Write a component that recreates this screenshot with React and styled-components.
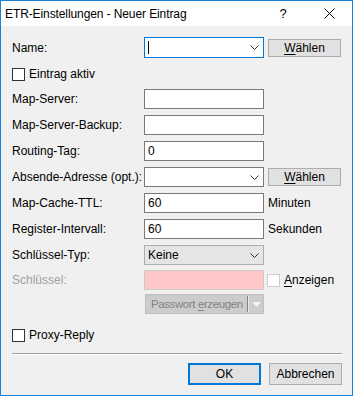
import React from "react";
import styled, { createGlobalStyle } from "styled-components";

const Global = createGlobalStyle`
  html, body { margin: 0; padding: 0; background: #ffffff; }
  body { font-family: "Liberation Sans", Arial, sans-serif; font-size: 12px; color: #000; }
`;

const Window = styled.div`
  box-sizing: border-box;
  width: 353px;
  height: 396px;
  border: 1px solid #1883d7;
  background: #f0f0f0;
  display: flex;
  flex-direction: column;
`;

const TitleBar = styled.div`
  height: 25px;
  background: #ffffff;
  display: flex;
  align-items: center;
  padding-left: 4px;
`;

const Title = styled.div`
  flex: 1;
  font-size: 12px;
  color: #000;
  padding-top: 1px;
  letter-spacing: -0.1px;
`;

const TitleButton = styled.div`
  width: ${(p) => p.$w}px;
  height: 25px;
  display: flex;
  align-items: center;
  justify-content: center;
  font-size: 13px;
  color: #000;
`;

const Body = styled.div`
  flex: 1;
  padding: 11px 11px 0 11px;
  display: flex;
  flex-direction: column;
`;

const Row = styled.div`
  display: grid;
  grid-template-columns: 128px 120px auto;
  column-gap: 4px;
  align-items: center;
  height: ${(p) => p.$h || 20}px;
  margin-top: ${(p) => p.$mt || 0}px;
`;

const Label = styled.div`
  color: ${(p) => (p.$disabled ? "#a0a0a0" : "#000")};
  white-space: nowrap;
`;

const Input = styled.div`
  box-sizing: border-box;
  height: 20px;
  border: 1px solid ${(p) => (p.$disabled ? "#cccccc" : "#7a7a7a")};
  background: ${(p) => (p.$disabled ? "#ffc8c8" : "#ffffff")};
  display: flex;
  align-items: center;
  padding-left: 3px;
`;

const Combo = styled.div`
  box-sizing: border-box;
  height: ${(p) => p.$h || 20}px;
  border: 1px solid ${(p) => (p.$focused ? "#0078d7" : p.$list ? "#adadad" : "#7a7a7a")};
  background: ${(p) => (p.$list ? "#e5e5e5" : "#ffffff")};
  display: flex;
  align-items: center;
  padding: 0 4px 0 3px;
`;

const ComboText = styled.div`
  flex: 1;
`;

const Caret = styled.div`
  width: 1px;
  height: 13px;
  background: #000;
`;

const Button = styled.div`
  box-sizing: border-box;
  width: 73px;
  height: ${(p) => p.$h || 18}px;
  background: #e1e1e1;
  border: ${(p) => (p.$default ? "2px solid #0078d7" : "1px solid #adadad")};
  display: flex;
  align-items: center;
  justify-content: center;
  color: #000;
  white-space: nowrap;
`;

const Mn = styled.span`
  text-decoration: underline;
  text-underline-offset: 2px;
`;

const SplitButton = styled.div`
  box-sizing: border-box;
  grid-column: 2;
  margin-left: 1px;
  height: 20px;
  background: #cccccc;
  border: 1px solid #bfbfbf;
  display: flex;
  align-items: center;
  color: #838383;
  padding-left: 5px;
  white-space: nowrap;
`;

const SplitText = styled.div`
  flex: 1;
  font-size: 11.5px;
  letter-spacing: -0.4px;
`;

const SplitDivider = styled.div`
  width: 1px;
  height: 16px;
  background: #838383;
  border-right: 1px solid #e8e8e8;
  margin-right: 2px;
`;

const Arrow = styled.div`
  width: 10px;
  display: flex;
  justify-content: center;
  margin-right: 2px;
`;

const CheckLine = styled.label`
  display: flex;
  align-items: center;
  gap: 4px;
  white-space: nowrap;
  grid-column: ${(p) => p.$col || "1 / span 2"};
  margin-left: ${(p) => p.$ml || 0}px;
  color: #000;
`;

const Box = styled.span`
  box-sizing: border-box;
  width: 13px;
  height: 13px;
  border: 1px solid ${(p) => (p.$disabled ? "#cccccc" : "#333333")};
  background: #ffffff;
  flex: none;
`;

const Unit = styled.div`
  color: #000;
  white-space: nowrap;
`;

const Separator = styled.div`
  margin-top: 8px;
  margin-right: -1px;
  height: 0;
  border-top: 1px solid #a0a0a0;
  border-bottom: 1px solid #ffffff;
`;

const Footer = styled.div`
  margin-top: 8px;
  display: flex;
  justify-content: flex-end;
  gap: 8px;
  margin-right: -1px;
`;

const Chevron = () => (
  <svg width="9" height="5" viewBox="0 0 9 5">
    <path d="M0.5 0.5 L4.5 4.5 L8.5 0.5" fill="none" stroke="#333" strokeWidth="1" />
  </svg>
);

const CloseIcon = () => (
  <svg width="11" height="11" viewBox="0 0 11 11">
    <path d="M0.5 0.5 L10.5 10.5 M10.5 0.5 L0.5 10.5" fill="none" stroke="#000" strokeWidth="1" />
  </svg>
);

const DownTriangle = () => (
  <svg width="9" height="5" viewBox="0 0 9 5">
    <path d="M0 0 L9 0 L4.5 5 Z" fill="#f4f4f4" />
  </svg>
);

const TextRow = ({ label, value, unit, mt }) => (
  <Row $mt={mt}>
    <Label>{label}</Label>
    <Input>{value}</Input>
    {unit ? <Unit>{unit}</Unit> : <span />}
  </Row>
);

export default function App() {
  return (
    <>
      <Global />
      <Window>
        <TitleBar>
          <Title>ETR-Einstellungen - Neuer Eintrag</Title>
          <TitleButton $w={46}>?</TitleButton>
          <TitleButton $w={46}>
            <CloseIcon />
          </TitleButton>
        </TitleBar>
        <Body>
          <Row $h={21}>
            <Label>Name:</Label>
            <Combo $h={21} $focused>
              <ComboText>
                <Caret />
              </ComboText>
              <Chevron />
            </Combo>
            <Button>
              <span>
                <Mn>W</Mn>ählen
              </span>
            </Button>
          </Row>
          <Row $mt={6}>
            <CheckLine>
              <Box />
              Eintrag aktiv
            </CheckLine>
          </Row>
          <TextRow mt={5} label="Map-Server:" value="" />
          <TextRow mt={6} label="Map-Server-Backup:" value="" />
          <TextRow mt={6} label="Routing-Tag:" value="0" />
          <Row $mt={6}>
            <Label>Absende-Adresse (opt.):</Label>
            <Combo>
              <ComboText />
              <Chevron />
            </Combo>
            <Button>
              <span>
                <Mn>W</Mn>ählen
              </span>
            </Button>
          </Row>
          <TextRow mt={6} label="Map-Cache-TTL:" value="60" unit="Minuten" />
          <TextRow mt={6} label="Register-Intervall:" value="60" unit="Sekunden" />
          <Row $mt={6}>
            <Label>Schlüssel-Typ:</Label>
            <Combo $list>
              <ComboText>Keine</ComboText>
              <Chevron />
            </Combo>
            <span />
          </Row>
          <Row $mt={5}>
            <Label $disabled>Schlüssel:</Label>
            <Input $disabled />
            <CheckLine $col="3" $ml={-1}>
              <Box $disabled />
              <span>
                <Mn>A</Mn>nzeigen
              </span>
            </CheckLine>
          </Row>
          <Row $mt={4}>
            <SplitButton>
              <SplitText>
                Passwort <Mn>e</Mn>rzeugen
              </SplitText>
              <SplitDivider />
              <Arrow>
                <DownTriangle />
              </Arrow>
            </SplitButton>
          </Row>
          <Row $mt={11}>
            <CheckLine>
              <Box />
              Proxy-Reply
            </CheckLine>
          </Row>
          <Separator />
          <Footer>
            <Button $h={22} $default>
              OK
            </Button>
            <Button $h={22}>Abbrechen</Button>
          </Footer>
        </Body>
      </Window>
    </>
  );
}
